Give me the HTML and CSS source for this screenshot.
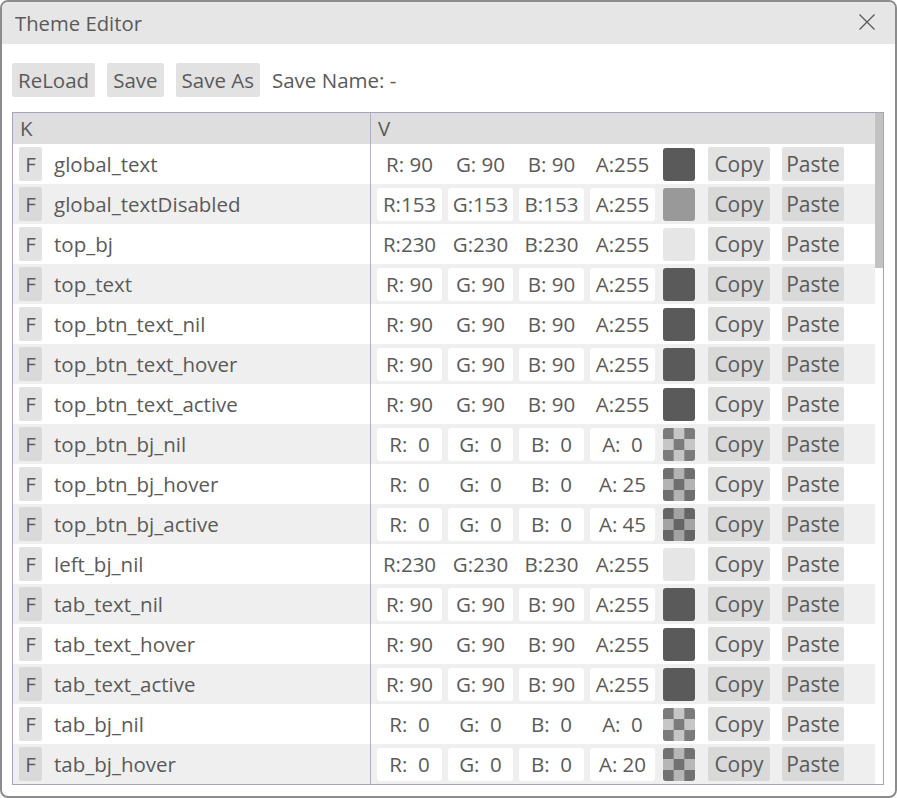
FILE: index.html
```html
<!DOCTYPE html>
<html>
<head>
<meta charset="utf-8">
<title>Theme Editor</title>
<link rel="stylesheet" href="styles.css">
</head>
<body>
<div class="window">
  <div class="titlebar">
    <span class="title">Theme Editor</span>
    <svg class="close" width="16" height="16" viewBox="0 0 16 16"><path d="M0.5 0.5 L15.5 15.5 M15.5 0.5 L0.5 15.5" stroke="#5a5a5a" stroke-width="1.3" fill="none"/></svg>
  </div>
  <div class="content">
    <div class="toolbar">
      <button class="btn">ReLoad</button>
      <button class="btn">Save</button>
      <button class="btn">Save As</button>
      <span class="savename">Save Name: -</span>
    </div>
    <div class="table">
      <div class="body">
        <div class="head">
          <div class="kcell">K</div>
          <div class="vcell">V</div>
        </div>
        <div class="rows">
          <div class="row"><div class="kcell"><span class="fbtn">F</span><span class="key">global_text</span></div><div class="vcell"><span class="num">R: 90</span><span class="num">G: 90</span><span class="num">B: 90</span><span class="num">A:255</span><span class="swatch" style="background:rgb(90,90,90)"></span><span class="act copy">Copy</span><span class="act paste">Paste</span></div></div>
          <div class="row"><div class="kcell"><span class="fbtn">F</span><span class="key">global_textDisabled</span></div><div class="vcell"><span class="num">R:153</span><span class="num">G:153</span><span class="num">B:153</span><span class="num">A:255</span><span class="swatch" style="background:rgb(153,153,153)"></span><span class="act copy">Copy</span><span class="act paste">Paste</span></div></div>
          <div class="row"><div class="kcell"><span class="fbtn">F</span><span class="key">top_bj</span></div><div class="vcell"><span class="num">R:230</span><span class="num">G:230</span><span class="num">B:230</span><span class="num">A:255</span><span class="swatch" style="background:rgb(230,230,230)"></span><span class="act copy">Copy</span><span class="act paste">Paste</span></div></div>
          <div class="row"><div class="kcell"><span class="fbtn">F</span><span class="key">top_text</span></div><div class="vcell"><span class="num">R: 90</span><span class="num">G: 90</span><span class="num">B: 90</span><span class="num">A:255</span><span class="swatch" style="background:rgb(90,90,90)"></span><span class="act copy">Copy</span><span class="act paste">Paste</span></div></div>
          <div class="row"><div class="kcell"><span class="fbtn">F</span><span class="key">top_btn_text_nil</span></div><div class="vcell"><span class="num">R: 90</span><span class="num">G: 90</span><span class="num">B: 90</span><span class="num">A:255</span><span class="swatch" style="background:rgb(90,90,90)"></span><span class="act copy">Copy</span><span class="act paste">Paste</span></div></div>
          <div class="row"><div class="kcell"><span class="fbtn">F</span><span class="key">top_btn_text_hover</span></div><div class="vcell"><span class="num">R: 90</span><span class="num">G: 90</span><span class="num">B: 90</span><span class="num">A:255</span><span class="swatch" style="background:rgb(90,90,90)"></span><span class="act copy">Copy</span><span class="act paste">Paste</span></div></div>
          <div class="row"><div class="kcell"><span class="fbtn">F</span><span class="key">top_btn_text_active</span></div><div class="vcell"><span class="num">R: 90</span><span class="num">G: 90</span><span class="num">B: 90</span><span class="num">A:255</span><span class="swatch" style="background:rgb(90,90,90)"></span><span class="act copy">Copy</span><span class="act paste">Paste</span></div></div>
          <div class="row"><div class="kcell"><span class="fbtn">F</span><span class="key">top_btn_bj_nil</span></div><div class="vcell"><span class="num">R:  0</span><span class="num">G:  0</span><span class="num">B:  0</span><span class="num">A:  0</span><span class="swatch check" style="--a:0"></span><span class="act copy">Copy</span><span class="act paste">Paste</span></div></div>
          <div class="row"><div class="kcell"><span class="fbtn">F</span><span class="key">top_btn_bj_hover</span></div><div class="vcell"><span class="num">R:  0</span><span class="num">G:  0</span><span class="num">B:  0</span><span class="num">A: 25</span><span class="swatch check" style="--a:0.098"></span><span class="act copy">Copy</span><span class="act paste">Paste</span></div></div>
          <div class="row"><div class="kcell"><span class="fbtn">F</span><span class="key">top_btn_bj_active</span></div><div class="vcell"><span class="num">R:  0</span><span class="num">G:  0</span><span class="num">B:  0</span><span class="num">A: 45</span><span class="swatch check" style="--a:0.176"></span><span class="act copy">Copy</span><span class="act paste">Paste</span></div></div>
          <div class="row"><div class="kcell"><span class="fbtn">F</span><span class="key">left_bj_nil</span></div><div class="vcell"><span class="num">R:230</span><span class="num">G:230</span><span class="num">B:230</span><span class="num">A:255</span><span class="swatch" style="background:rgb(230,230,230)"></span><span class="act copy">Copy</span><span class="act paste">Paste</span></div></div>
          <div class="row"><div class="kcell"><span class="fbtn">F</span><span class="key">tab_text_nil</span></div><div class="vcell"><span class="num">R: 90</span><span class="num">G: 90</span><span class="num">B: 90</span><span class="num">A:255</span><span class="swatch" style="background:rgb(90,90,90)"></span><span class="act copy">Copy</span><span class="act paste">Paste</span></div></div>
          <div class="row"><div class="kcell"><span class="fbtn">F</span><span class="key">tab_text_hover</span></div><div class="vcell"><span class="num">R: 90</span><span class="num">G: 90</span><span class="num">B: 90</span><span class="num">A:255</span><span class="swatch" style="background:rgb(90,90,90)"></span><span class="act copy">Copy</span><span class="act paste">Paste</span></div></div>
          <div class="row"><div class="kcell"><span class="fbtn">F</span><span class="key">tab_text_active</span></div><div class="vcell"><span class="num">R: 90</span><span class="num">G: 90</span><span class="num">B: 90</span><span class="num">A:255</span><span class="swatch" style="background:rgb(90,90,90)"></span><span class="act copy">Copy</span><span class="act paste">Paste</span></div></div>
          <div class="row"><div class="kcell"><span class="fbtn">F</span><span class="key">tab_bj_nil</span></div><div class="vcell"><span class="num">R:  0</span><span class="num">G:  0</span><span class="num">B:  0</span><span class="num">A:  0</span><span class="swatch check" style="--a:0"></span><span class="act copy">Copy</span><span class="act paste">Paste</span></div></div>
          <div class="row"><div class="kcell"><span class="fbtn">F</span><span class="key">tab_bj_hover</span></div><div class="vcell"><span class="num">R:  0</span><span class="num">G:  0</span><span class="num">B:  0</span><span class="num">A: 20</span><span class="swatch check" style="--a:0.078"></span><span class="act copy">Copy</span><span class="act paste">Paste</span></div></div>
        </div>
      </div>
      <div class="scrollbar"><div class="thumb"></div></div>
    </div>
  </div>
</div>
</body>
</html>
```
FILE: styles.css
```css
* { box-sizing: border-box; }
html, body { margin: 0; padding: 0; background: #ffffff; }
body {
  font-family: "Open Sans", "Noto Sans", sans-serif;
  color: #5a5a5a;
  font-size: 20.5px;
}
.window {
  width: 897px;
  height: 798px;
  border: 2px solid #8c8c8c;
  border-radius: 8px;
  overflow: hidden;
  background: #fff;
  display: flex;
  flex-direction: column;
}
.titlebar {
  height: 42px;
  flex: none;
  background: #e6e6e6;
  display: flex;
  align-items: center;
  justify-content: space-between;
  padding: 0 20px 0 13px;
}
.title { font-size: 20.3px; line-height: 1; }
.close { display: block; margin-top: -3px; }
.content {
  flex: 1;
  padding: 19px 11px 0 10px;
  display: flex;
  flex-direction: column;
  min-height: 0;
}
.toolbar {
  display: flex;
  align-items: center;
  gap: 12px;
  height: 34px;
}
.btn {
  font: inherit;
  color: inherit;
  border: none;
  background: #e2e2e2;
  border-radius: 2px;
  height: 34px;
  padding: 0 6px;
  line-height: 34px;
}
.savename { line-height: 34px; }
.table {
  margin-top: 15px;
  border: 1px solid #a8a3bc;
  display: flex;
  height: 673px;
  flex: none;
}
.body { flex: 1; min-width: 0; }
.scrollbar { width: 8px; flex: none; background: #fff; }
.thumb { height: 155px; background: #c2c2c2; }
.head {
  height: 31px;
  background: #dedede;
  display: flex;
  align-items: center;
}
.head .kcell { padding-left: 7px; height: 31px; line-height: 31px; }
.head .vcell { padding-left: 7px; height: 31px; line-height: 31px; }
.kcell {
  width: 358px;
  flex: none;
  border-right: 1px solid #b3aec6;
  display: flex;
  align-items: center;
  height: 100%;
}
.vcell {
  flex: 1;
  display: flex;
  align-items: center;
  padding-left: 6px;
  height: 100%;
}
.row {
  height: 40px;
  display: flex;
  align-items: center;
  background: #fff;
}
.rows .row:nth-child(even) { background: #efefef; }
.row .kcell { padding-left: 6px; }
.fbtn {
  width: 23px;
  height: 34px;
  background: #e2e2e2;
  border-radius: 2px;
  display: flex;
  align-items: center;
  justify-content: center;
  flex: none;
}
.rows .row:nth-child(even) .fbtn,
.rows .row:nth-child(even) .act { background: #d9d9d9; }
.key { margin-left: 12px; white-space: nowrap; }
.num {
  width: 65px;
  height: 33px;
  background: #fff;
  border-radius: 3px;
  display: flex;
  align-items: center;
  justify-content: center;
  white-space: pre;
  margin-right: 6px;
  flex: none;
}
.num:nth-child(4) { margin-right: 8px; }
.swatch {
  width: 32px;
  height: 33px;
  border-radius: 3px;
  flex: none;
}
.swatch.check {
  background:
    linear-gradient(rgba(0,0,0,var(--a)), rgba(0,0,0,var(--a))),
    repeating-conic-gradient(#c6c6c6 0 25%, #7b7b7b 0 50%) 0 0 / 21.33px 22px;
}
.act {
  width: 62px;
  height: 34px;
  background: #e2e2e2;
  border-radius: 2px;
  display: flex;
  align-items: center;
  justify-content: center;
  flex: none;
  font-size: 21px;
}
.copy { margin-left: 13px; }
.paste { margin-left: 12px; }
```
